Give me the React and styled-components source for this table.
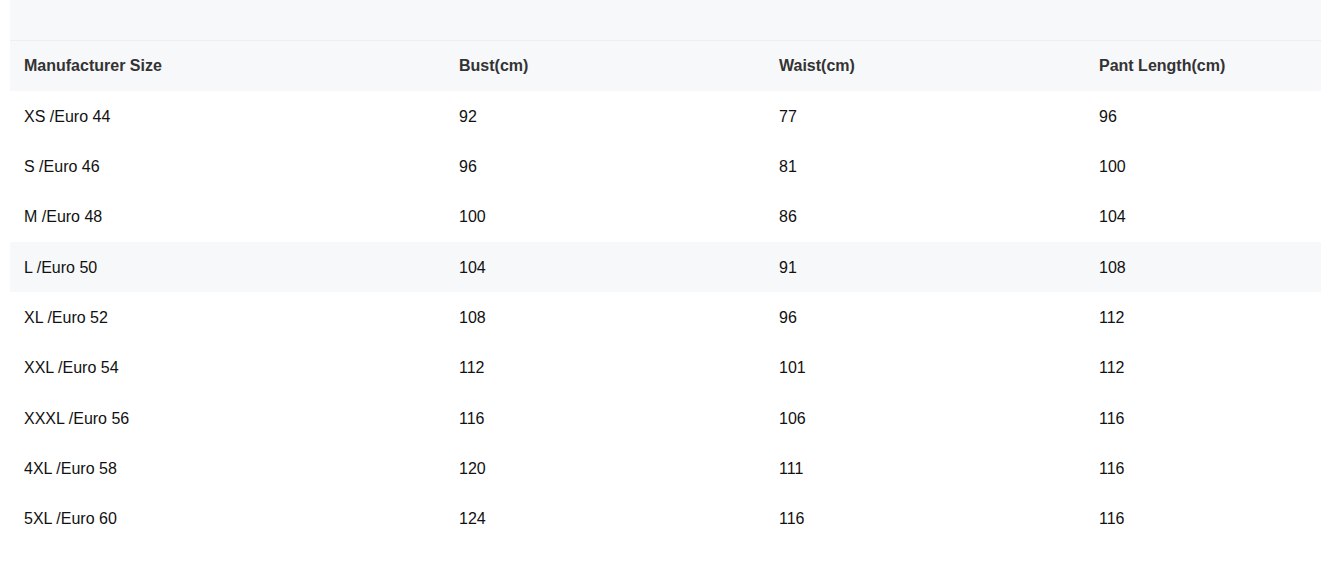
import React from "react";
import styled, { createGlobalStyle } from "styled-components";

const Global = createGlobalStyle`
  html, body { margin: 0; padding: 0; background: #fff; }
  body { font-family: "Liberation Sans", Arial, sans-serif; }
`;

const Wrapper = styled.div`
  padding-left: 10px;
  width: 1311px;
  overflow: hidden;
`;

const Inner = styled.div`
  width: 1395px;
`;

const TopBar = styled.div`
  height: 40px;
  background: #f7f8fa;
  border-bottom: 1px solid #eceef1;
`;

const Table = styled.table`
  width: 1395px;
  border-collapse: collapse;
  table-layout: fixed;
`;

const HeadRow = styled.tr`
  height: 50px;
  background: #f7f8fa;
`;

const Th = styled.th`
  box-sizing: border-box;
  text-align: left;
  padding: 0 0 1px 14px;
  font-size: 16px;
  font-weight: 700;
  color: #333;
  width: ${(p) => p.$w}px;
`;

const Row = styled.tr`
  height: 50.35px;
  background: ${(p) => (p.$hl ? "#f7f8fa" : "#fff")};
`;

const Td = styled.td`
  padding: 1px 0 0 14px;
  font-size: 16px;
  color: #111;
`;

const cols = [
  ["Manufacturer Size", 435],
  ["Bust(cm)", 320],
  ["Waist(cm)", 320],
  ["Pant Length(cm)", 320],
];

const rows = [
  ["XS /Euro 44", 92, 77, 96],
  ["S /Euro 46", 96, 81, 100],
  ["M /Euro 48", 100, 86, 104],
  ["L /Euro 50", 104, 91, 108],
  ["XL /Euro 52", 108, 96, 112],
  ["XXL /Euro 54", 112, 101, 112],
  ["XXXL /Euro 56", 116, 106, 116],
  ["4XL /Euro 58", 120, 111, 116],
  ["5XL /Euro 60", 124, 116, 116],
];

export default function App() {
  return (
    <>
      <Global />
      <Wrapper>
        <Inner>
          <TopBar />
          <Table>
            <thead>
              <HeadRow>
                {cols.map(([c, w]) => (
                  <Th key={c} $w={w}>{c}</Th>
                ))}
              </HeadRow>
            </thead>
            <tbody>
              {rows.map((r, i) => (
                <Row key={r[0]} $hl={i === 3}>
                  {r.map((v, j) => (
                    <Td key={j}>{v}</Td>
                  ))}
                </Row>
              ))}
            </tbody>
          </Table>
        </Inner>
      </Wrapper>
    </>
  );
}
